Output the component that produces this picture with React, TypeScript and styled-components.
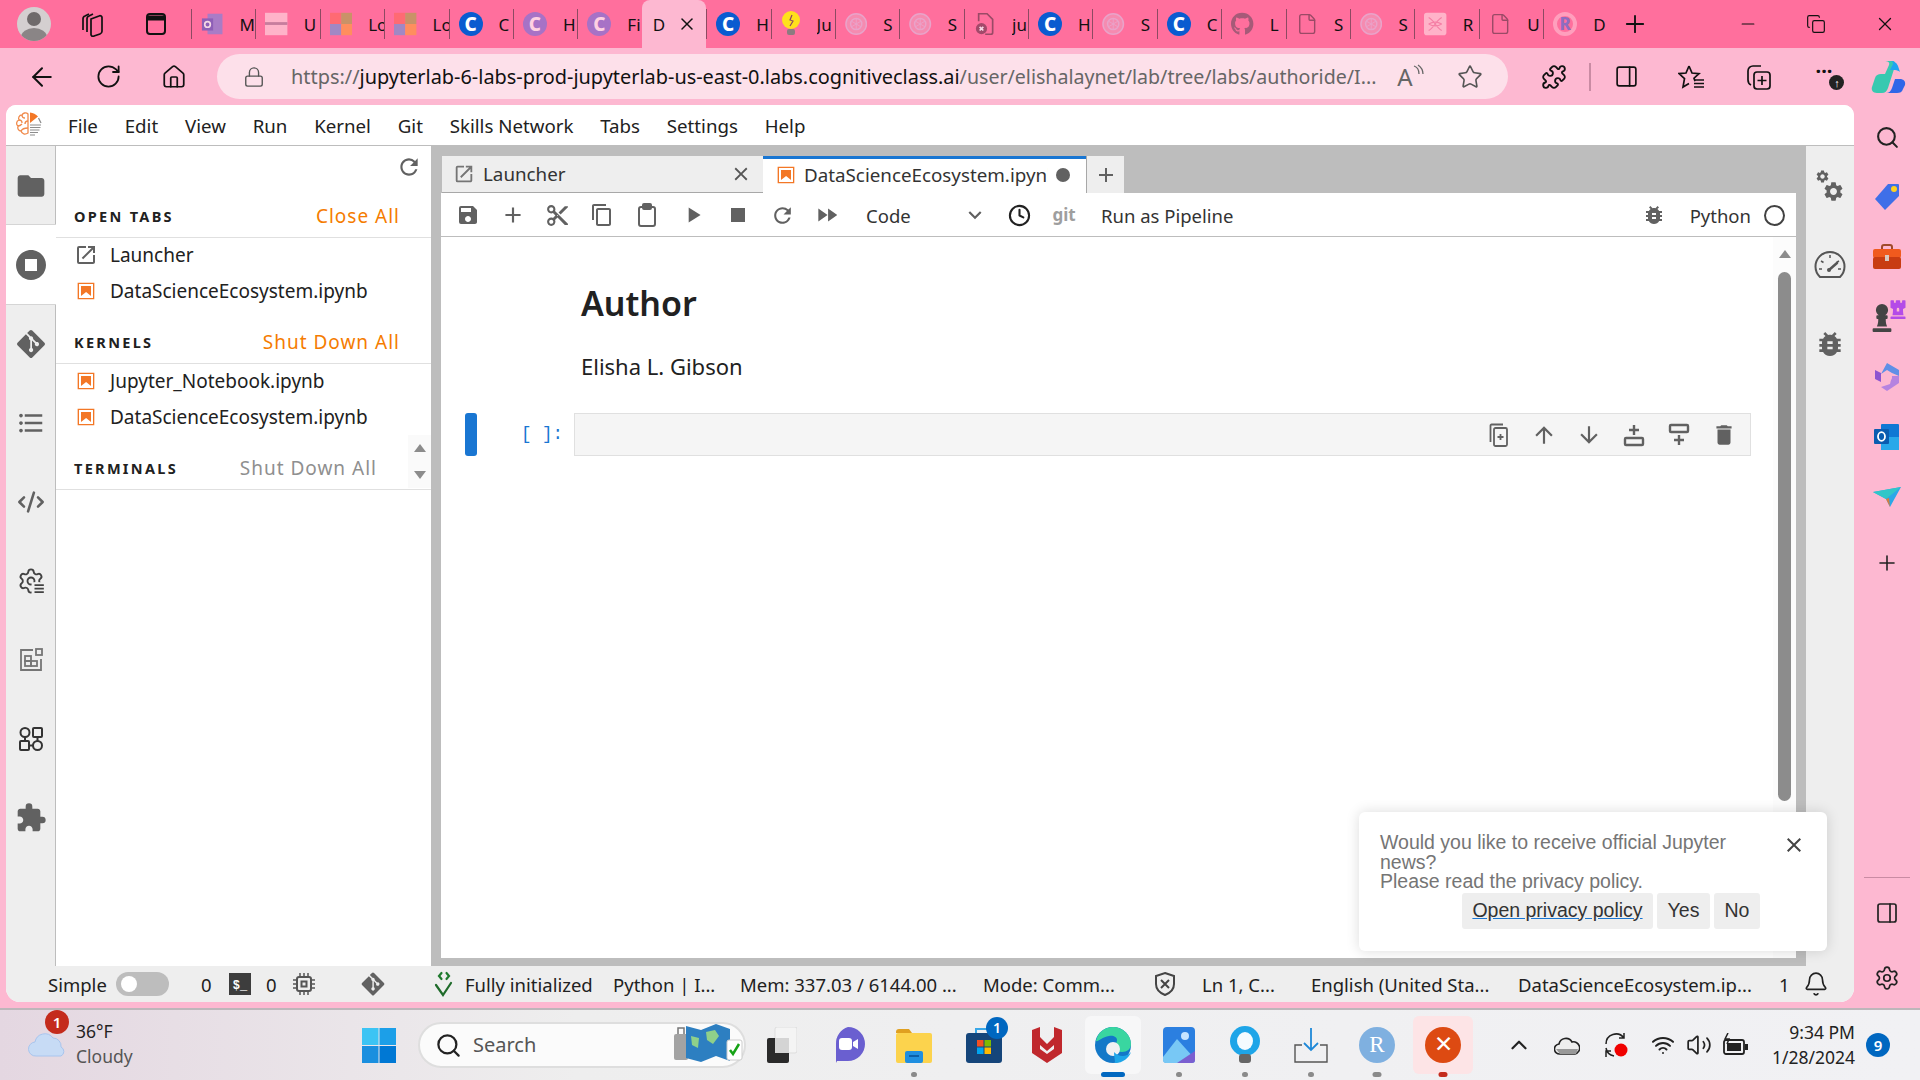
import React from "react";
import styled, { createGlobalStyle } from "styled-components";
import {
  MdAdd,
  MdArrowDownward,
  MdArrowUpward,
  MdContentCopy,
  MdContentCut,
  MdDelete,
  MdExtension,
  MdFastForward,
  MdFolder,
  MdFormatListBulleted,
  MdOpenInNew,
  MdPlayArrow,
  MdRefresh,
  MdSave,
  MdStop,
  MdStopCircle,
  MdBugReport,
  MdClose,
  MdKeyboardArrowDown,
} from "react-icons/md";
import { FaGitAlt, FaGithub, FaChessPawn, FaChessRook } from "react-icons/fa";
import {
  ArrowLeft,
  Bell,
  ChevronUp,
  Clock,
  CodeXml,
  Copy,
  Home,
  Lock,
  Minus,
  PanelRight,
  Plus,
  RotateCw,
  Search,
  Settings,
  Star,
  Volume2,
  Wifi,
  X,
  Puzzle,
  File,
} from "lucide-react";

const UI = `"Noto Sans", "Open Sans", sans-serif`;

const GlobalStyle = createGlobalStyle`
  html, body {
    margin: 0;
    width: 1920px;
    height: 1080px;
    overflow: hidden;
    font-family: ${UI};
    color: #212121;
  }
  * { box-sizing: border-box; }
`;

const Screen = styled.div`
  width: 1920px;
  height: 1080px;
  display: flex;
  flex-direction: column;
  background: #fdb8d1;
`;

const Slot = styled.div<{ $w?: number; $color?: string; $pl?: number; $ml?: number }>`
  width: ${(p) => (p.$w ? `${p.$w}px` : "auto")};
  flex: none;
  display: flex;
  align-items: center;
  justify-content: center;
  padding-left: ${(p) => p.$pl ?? 0}px;
  margin-left: ${(p) => p.$ml ?? 0}px;
  color: ${(p) => p.$color || "inherit"};
`;

/* ---- browser tab strip ---- */
const TabStrip = styled.div`
  height: 48px;
  display: flex;
  align-items: center;
  background: #ff6f9d;
  color: #111;
`;

const Avatar = styled.div`
  width: 34px;
  height: 34px;
  border-radius: 50%;
  background: #d4cfd0;
  overflow: hidden;
`;

const BrowserTab = styled.div<{ $active?: boolean }>`
  width: 64.4px;
  flex: none;
  height: ${(p) => (p.$active ? "48px" : "30px")};
  display: flex;
  align-items: center;
  padding-left: ${(p) => (p.$active ? "11px" : "9px")};
  background: ${(p) => (p.$active ? "#fdb8d1" : "transparent")};
  border-radius: ${(p) => (p.$active ? "8px 8px 0 0" : "0")};
  border-left: ${(p) => (p.$active ? "none" : "1px solid #8d4a62")};
  font-size: 17px;
  overflow: hidden;
  align-self: ${(p) => (p.$active ? "flex-end" : "center")};
`;

const TabLabel = styled.span`
  width: 16px;
  margin-left: 16px;
  overflow: hidden;
  white-space: nowrap;
  flex: none;
`;

const ActiveLabel = styled.span`
  width: 24px;
  flex: none;
`;

const FavCircle = styled.span<{ $bg: string; $fg: string }>`
  width: 24px;
  height: 24px;
  flex: none;
  border-radius: 50%;
  background: ${(p) => p.$bg};
  color: ${(p) => p.$fg};
  font: 800 19px/24px ${UI};
  text-align: center;
`;

const FavR = styled.span`
  width: 24px;
  height: 24px;
  flex: none;
  border-radius: 50%;
  border: 4px solid #ff9fbd;
  color: #8f6cc0;
  font: 800 17px/16px ${UI};
  text-align: center;
`;

const Spacer = styled.div`
  flex: 1;
`;

/* ---- address bar ---- */
const AddressBar = styled.div`
  height: 57px;
  display: flex;
  align-items: center;
  padding-left: 9px;
  color: #111;
`;

const UrlPill = styled.div`
  margin-left: 10px;
  width: 1291px;
  height: 45px;
  flex: none;
  border-radius: 23px;
  background: #fde0ea;
  display: flex;
  align-items: center;
  color: #555;
`;

const UrlText = styled.div`
  width: 1088px;
  flex: none;
  overflow: hidden;
  white-space: nowrap;
  font-size: 19.9px;
  color: #666;
  b {
    font-weight: 400;
    color: #111;
  }
  span {
    font-size: 19.6px;
  }
`;

const ReadAloud = styled.span`
  display: flex;
  align-items: flex-start;
  font-size: 24px;
  line-height: 26px;
  color: #666;
`;

const BarDivider = styled.div`
  width: 2px;
  height: 28px;
  background: #c98ba3;
  margin: 0 5px;
  flex: none;
`;

const UpdateDot = styled.span`
  position: absolute;
  right: -12px;
  bottom: -9px;
  width: 15px;
  height: 15px;
  border-radius: 50%;
  background: #222;
  color: #fff;
  font: 700 11px/15px ${UI};
  text-align: center;
`;

const Dots = styled.div`
  position: relative;
  font-size: 20px;
  font-weight: 700;
  line-height: 1;
  transform: translateY(-6px);
`;

/* ---- workspace: lab window + edge rail ---- */
const Workspace = styled.div`
  height: 903px;
  display: flex;
`;

const LabWindow = styled.div`
  position: relative;
  margin-left: 6px;
  width: 1848px;
  height: 897px;
  flex: none;
  display: flex;
  flex-direction: column;
  border-radius: 10px 10px 14px 14px;
  overflow: hidden;
  background: #fff;
`;

const MenuBar = styled.div`
  height: 41px;
  flex: none;
  display: flex;
  align-items: center;
  background: #fff;
  border-bottom: 1px solid #bdbdbd;
  padding-left: 8px;
`;

const LogoBox = styled.div`
  width: 54px;
  flex: none;
  display: flex;
`;

const MenuItem = styled.span`
  font-size: 18.7px;
  margin-right: 26.8px;
  color: #212121;
`;

const LabBody = styled.div`
  flex: 1;
  min-height: 0;
  display: flex;
  background: #bdbdbd;
`;

const Rail = styled.div<{ $w: number; $side: "left" | "right" }>`
  width: ${(p) => p.$w}px;
  flex: none;
  background: #eeeeee;
  display: flex;
  flex-direction: column;
  border-right: ${(p) => (p.$side === "left" ? "1px solid #bdbdbd" : "none")};
`;

const RailButton = styled.div<{ $active?: boolean }>`
  height: 79px;
  flex: none;
  display: flex;
  align-items: center;
  justify-content: center;
  color: #616161;
  background: ${(p) => (p.$active ? "#fff" : "transparent")};
  margin-right: ${(p) => (p.$active ? "-1px" : "0")};
  box-shadow: ${(p) => (p.$active ? "0 -1px 0 #d5d5d5, 0 1px 0 #d5d5d5" : "none")};
  position: relative;
`;

const SidePanel = styled.div`
  position: relative;
  width: 375px;
  flex: none;
  background: #fff;
  display: flex;
  flex-direction: column;
`;

const PanelTools = styled.div`
  height: 51px;
  flex: none;
  display: flex;
  justify-content: flex-end;
  padding: 8px 9px 0 0;
  color: #616161;
`;

const SectionHead = styled.div<{ $gap?: boolean; $right?: number }>`
  height: 41px;
  flex: none;
  margin-top: ${(p) => (p.$gap ? "13px" : "0")};
  border-bottom: 1px solid #e0e0e0;
  padding: 0 ${(p) => p.$right ?? 31}px 3px 18px;
  display: flex;
  align-items: center;
  justify-content: space-between;
`;

const SectionTitle = styled.span`
  font-size: 14.5px;
  font-weight: 700;
  letter-spacing: 2.3px;
  color: #212121;
`;

const SectionAction = styled.span<{ $off?: boolean }>`
  font-size: 19px;
  letter-spacing: 1px;
  color: ${(p) => (p.$off ? "#8f8f8f" : "#f57c00")};
`;

const SessionRow = styled.div`
  height: 36px;
  flex: none;
  display: flex;
  align-items: center;
  padding: 0 0 3px 20px;
  gap: 14px;
  font-size: 19px;
  color: #212121;
`;

const RowLauncher = styled(MdOpenInNew)`
  margin: 0 -2px;
`;

const SmallScroll = styled.div`
  position: absolute;
  right: 0;
  top: 289px;
  width: 23px;
  height: 53px;
  background: #fafafa;
  display: flex;
  flex-direction: column;
  align-items: center;
  justify-content: space-between;
  padding: 9px 0;
`;

const Tri = styled.span<{ $down?: boolean; $color?: string }>`
  width: 0;
  height: 0;
  border-left: 6px solid transparent;
  border-right: 6px solid transparent;
  ${(p) =>
    p.$down
      ? `border-top: 8px solid ${p.$color || "#8c8c8c"};`
      : `border-bottom: 8px solid ${p.$color || "#8c8c8c"};`}
`;

const MainArea = styled.div`
  width: 1355px;
  flex: none;
  margin: 10px 10px 8px;
  display: flex;
  flex-direction: column;
  min-height: 0;
`;

const DocTabs = styled.div`
  height: 37px;
  flex: none;
  display: flex;
`;

const DocTab = styled.div<{ $active?: boolean; $w: number }>`
  width: ${(p) => p.$w}px;
  flex: none;
  display: flex;
  align-items: center;
  gap: 8px;
  padding: ${(p) => (p.$active ? "0 16px 3px 13px" : "0 11px 0 11px")};
  background: ${(p) => (p.$active ? "#fff" : "#eeeeee")};
  border-top: ${(p) => (p.$active ? "3px solid #1976d2" : "none")};
  border-bottom: ${(p) => (p.$active ? "none" : "1px solid #a8a8a8")};
  font-size: 18.8px;
  color: #333;
  white-space: nowrap;
  margin-left: ${(p) => (p.$w === 321 ? "1px" : "0")};
`;

const DocTabName = styled.span`
  flex: 1;
  overflow: hidden;
`;

const DirtyDot = styled.span`
  width: 14px;
  height: 14px;
  flex: none;
  border-radius: 50%;
  background: #616161;
`;

const AddTab = styled.div`
  width: 38px;
  flex: none;
  background: #eeeeee;
  border-left: 1px solid #a8a8a8;
  display: flex;
  align-items: center;
  justify-content: center;
  color: #616161;
`;

const Toolbar = styled.div`
  height: 44px;
  flex: none;
  display: flex;
  align-items: center;
  background: #fff;
  border-bottom: 1px solid #bdbdbd;
  padding: 1px 0 0 4px;
  color: #616161;
`;

const ToolText = styled.span<{ $w?: number; $ml?: number }>`
  font-size: 18.5px;
  color: #333;
  width: ${(p) => (p.$w ? `${p.$w}px` : "auto")};
  margin-left: ${(p) => p.$ml ?? 0}px;
  flex: none;
`;

const GitWord = styled.span`
  width: 44px;
  margin-left: -4px;
  flex: none;
  text-align: center;
  font-size: 17px;
  font-weight: 700;
  color: #9e9e9e;
  transform: translateY(-1px);
`;

const KernelRing = styled.span`
  width: 21px;
  height: 21px;
  flex: none;
  border: 2px solid #424242;
  border-radius: 50%;
  margin-left: 13px;
`;

const Notebook = styled.div`
  flex: 1;
  min-height: 0;
  display: flex;
  background: #fff;
`;

const NotebookBody = styled.div`
  flex: 1;
  padding: 42px 22px 0 24px;
  display: flex;
  flex-direction: column;
`;

const Markdown = styled.div`
  padding-left: 116px;
`;

const Heading = styled.h1`
  margin: 0;
  height: 48px;
  font-size: 34px;
  line-height: 48px;
  font-weight: 600;
  color: #212121;
`;

const Para = styled.p`
  margin: 23px 0 0;
  font-size: 22px;
  line-height: 32px;
  color: #212121;
`;

const CodeCell = styled.div`
  margin-top: 31px;
  display: flex;
  height: 43px;
`;

const CellBar = styled.div`
  width: 12px;
  flex: none;
  background: #1976d2;
  border-radius: 3px;
`;

const Prompt = styled.div`
  width: 97px;
  flex: none;
  text-align: right;
  padding-right: 11px;
  font: 17.5px/43px "Liberation Mono", monospace;
  color: #1976d2;
`;

const CellInput = styled.div`
  flex: 1;
  background: #f5f5f5;
  border: 1px solid #e0e0e0;
  display: flex;
  align-items: center;
  justify-content: flex-end;
  padding-right: 4px;
  color: #616161;
`;

const ScrollTrack = styled.div`
  width: 23px;
  flex: none;
  background: #fcfcfc;
  display: flex;
  flex-direction: column;
  align-items: center;
  padding: 13px 0 0;
`;

const ScrollThumb = styled.div`
  width: 13px;
  height: 529px;
  margin-top: 14px;
  border-radius: 7px;
  background: #8c8c8c;
`;

const StatusBar = styled.div`
  height: 36px;
  flex: none;
  display: flex;
  align-items: center;
  background: #eeeeee;
  padding-left: 42px;
  font-size: 18.5px;
  color: #212121;
`;

const StatusCell = styled.div<{ $w: number }>`
  width: ${(p) => p.$w}px;
  flex: none;
  display: flex;
  align-items: center;
  white-space: nowrap;
  color: #212121;
`;

const Toggle = styled.div`
  width: 53px;
  height: 24px;
  border-radius: 12px;
  background: #bdbdbd;
  padding: 4px 5px;
  display: flex;
`;

const Knob = styled.span`
  width: 16px;
  height: 16px;
  border-radius: 50%;
  background: #fff;
`;

const TermBadge = styled.span`
  width: 22px;
  height: 22px;
  background: #3d3d3d;
  color: #fff;
  font: 700 12px/26px "Liberation Mono", monospace;
  text-align: center;
`;

const Toast = styled.div`
  position: absolute;
  left: 1353px;
  top: 707px;
  width: 468px;
  height: 139px;
  background: #fff;
  border-radius: 6px;
  box-shadow: 0 0 14px rgba(0, 0, 0, 0.14);
  padding: 21px 21px 0 21px;
  font-family: "Liberation Sans", Arial, sans-serif;
`;

const ToastTop = styled.div`
  display: flex;
  justify-content: space-between;
  align-items: flex-start;
`;

const ToastText = styled.div`
  width: 355px;
  font-size: 19.5px;
  line-height: 19.5px;
  color: #757575;
`;

const ToastClose = styled.div`
  color: #444;
`;

const ToastActions = styled.div`
  display: flex;
  gap: 4px;
  padding-left: 82px;
  margin-top: 1px;
`;

const ToastButton = styled.span<{ $w: number; $link?: boolean }>`
  width: ${(p) => p.$w}px;
  height: 36px;
  border-radius: 3px;
  background: #eeeeee;
  font-size: 19.5px;
  line-height: 34px;
  text-align: center;
  color: #333;
  text-decoration: ${(p) => (p.$link ? "underline" : "none")};
  text-decoration-color: #1976d2;
`;

/* ---- edge rail ---- */
const EdgeRail = styled.div`
  width: 66px;
  flex: none;
  display: flex;
  flex-direction: column;
  align-items: center;
  padding-top: 2px;
  color: #222;
`;

const EdgeSlot = styled.div<{ $h?: number }>`
  height: ${(p) => p.$h ?? 60}px;
  flex: none;
  display: flex;
  align-items: center;
  justify-content: center;
`;

const EdgeRule = styled.div`
  width: 46px;
  height: 1px;
  background: #c98ba3;
  flex: none;
`;

const Rook = styled(FaChessRook)`
  margin: -16px 0 0 -9px;
`;

/* ---- windows taskbar ---- */
const Taskbar = styled.div`
  height: 72px;
  flex: none;
  display: flex;
  align-items: center;
  border-top: 2px solid #bdb6ba;
  background: linear-gradient(90deg, #e4d7e1 0%, #eeeeee 30%, #f0f0f2 70%, #f1f1f4 100%);
`;

const Weather = styled.div`
  position: relative;
  width: 345px;
  flex: none;
  display: flex;
  align-items: center;
  padding-left: 28px;
  gap: 10px;
`;

const AlertDot = styled.span`
  position: absolute;
  left: 45px;
  top: -9px;
  width: 24px;
  height: 24px;
  border-radius: 50%;
  background: #c42b1c;
  color: #fff;
  font: 600 15px/24px ${UI};
  text-align: center;
`;

const WeatherText = styled.div`
  font-size: 17.5px;
  line-height: 25px;
  color: #222;
  padding-bottom: 2px;
  span {
    display: block;
    color: #555;
  }
`;

const SearchBox = styled.div`
  width: 328px;
  height: 46px;
  margin-left: 5px;
  flex: none;
  border-radius: 23px;
  border: 2px solid #dedede;
  background: #fbfbfb;
  display: flex;
  align-items: center;
  padding-left: 15px;
  gap: 11px;
  font-size: 20px;
  color: #555;
`;

const SearchLabel = styled.span`
  flex: 1;
  padding-bottom: 2px;
`;

const TaskApp = styled.div<{ $w: number; $dot?: string; $dotW?: number; $hl?: string; $hlW?: number }>`
  position: relative;
  width: ${(p) => p.$w}px;
  height: 70px;
  flex: none;
  display: flex;
  align-items: center;
  justify-content: center;
  &::before {
    content: "";
    display: ${(p) => (p.$hl ? "block" : "none")};
    position: absolute;
    left: 50%;
    top: 6px;
    width: ${(p) => p.$hlW ?? 56}px;
    height: 58px;
    transform: translateX(-50%);
    border-radius: 6px;
    background: ${(p) => p.$hl};
  }
  &::after {
    content: "";
    display: ${(p) => (p.$dot ? "block" : "none")};
    position: absolute;
    left: 50%;
    bottom: 3px;
    width: ${(p) => p.$dotW ?? 6}px;
    height: 5px;
    border-radius: 3px;
    transform: translateX(-50%);
    background: ${(p) => p.$dot};
  }
  & > * {
    position: relative;
  }
`;

const StoreBadge = styled.span`
  position: absolute;
  right: 13px;
  top: 7px;
  width: 22px;
  height: 22px;
  border-radius: 50%;
  background: #0067c0;
  color: #fff;
  font: 600 14px/22px ${UI};
  text-align: center;
`;

const AppCircle = styled.span<{ $bg: string }>`
  width: 36px;
  height: 36px;
  border-radius: 50%;
  background: ${(p) => p.$bg};
  color: #fff;
  font: 400 23px/36px "Liberation Serif", serif;
  text-align: center;
`;

const ClockBox = styled.div`
  width: 102px;
  flex: none;
  text-align: right;
  font-size: 17.5px;
  line-height: 25px;
  color: #222;
`;

const NoteBadge = styled.span`
  width: 24px;
  height: 24px;
  margin-left: 11px;
  flex: none;
  border-radius: 50%;
  background: #0067c0;
  color: #fff;
  font: 600 15px/24px ${UI};
  text-align: center;
`;

/* ---- drawn icons ---- */
const GEAR =
  "M19.14 12.94c.04-.3.06-.61.06-.94 0-.32-.02-.64-.07-.94l2.03-1.58a.49.49 0 0 0 .12-.61l-1.92-3.32a.488.488 0 0 0-.59-.22l-2.39.96c-.5-.38-1.03-.7-1.62-.94l-.36-2.54a.484.484 0 0 0-.48-.41h-3.84c-.24 0-.43.17-.47.41l-.36 2.54c-.59.24-1.13.57-1.62.94l-2.39-.96c-.22-.08-.47 0-.59.22L2.74 8.87c-.12.21-.08.47.12.61l2.03 1.58c-.05.3-.09.63-.09.94s.02.64.07.94l-2.03 1.58a.49.49 0 0 0-.12.61l1.92 3.32c.12.22.37.29.59.22l2.39-.96c.5.38 1.03.7 1.62.94l.36 2.54c.05.24.24.41.48.41h3.84c.24 0 .44-.17.47-.41l.36-2.54c.59-.24 1.13-.56 1.62-.94l2.39.96c.22.08.47 0 .59-.22l1.92-3.32c.12-.22.07-.47-.12-.61l-2.01-1.58zM12 15.6c-1.98 0-3.6-1.62-3.6-3.6s1.62-3.6 3.6-3.6 3.6 1.62 3.6 3.6-1.62 3.6-3.6 3.6z";

const NotebookIcon = ({ size = 20 }: { size?: number }) => (
  <svg width={size} height={size} viewBox="0 0 22 22">
    <path fill="#f37726" d="M18.7 3.3v15.4H3.3V3.3h15.4m1.5-1.5H1.8v18.3h18.3l.1-18.3z" />
    <path fill="#f37726" d="M16.5 16.5l-5.4-4.3-5.6 4.3v-11h11z" />
  </svg>
);

const LabLogo = () => (
  <svg width="30" height="28" viewBox="0 0 30 28">
    <g fill="none" stroke="#f08a4b" strokeWidth="1.3">
      <path d="M14 3c-2-2-5-1-6 1-3 0-4 3-3 5-3 1-3 5-1 6-1 3 1 5 3 5 1 3 4 4 7 2z" />
      <path d="M5 9c2 0 3 1 3 3M8 4c0 2 1 3 3 3M4 15c2 0 3-1 4-2M7 20c1-2 3-3 7-3M14 10c-2 0-3 1-3 3" />
    </g>
    <path fill="#f37726" d="M16 1.5a12 12 0 0 1 8 4L16 12z" />
    <g stroke="#8c8c8c" strokeWidth="1.2">
      <path d="M16 14h11M16 16.5h10.5M16 19h9.5M16 21.5h8M16 24h5" />
      <path d="M24.5 7l2.5 5" />
    </g>
  </svg>
);

const GearLines = () => (
  <svg width="28" height="28" viewBox="0 0 24 24" fill="none" stroke="#424242" strokeWidth="1.6">
    <path d="M9.671 4.136a2.34 2.34 0 0 1 4.659 0 2.34 2.34 0 0 0 3.319 1.915 2.34 2.34 0 0 1 2.33 4.033 2.34 2.34 0 0 0 0 3.831 2.34 2.34 0 0 1-2.33 4.033 2.34 2.34 0 0 0-3.319 1.915 2.34 2.34 0 0 1-4.659 0 2.34 2.34 0 0 0-3.32-1.915 2.34 2.34 0 0 1-2.33-4.033 2.34 2.34 0 0 0 0-3.831A2.34 2.34 0 0 1 6.35 6.051a2.34 2.34 0 0 0 3.319-1.915" />
    <circle cx="12" cy="12" r="3" />
    <rect x="12.5" y="13" width="11.5" height="11" fill="#eee" stroke="none" />
    <path d="M15 15.5h8M15 18.5h8M15 21.5h8" />
  </svg>
);

const BoardIcon = () => (
  <svg width="26" height="26" viewBox="0 0 26 26" fill="none" stroke="#757575" strokeWidth="1.8">
    <path d="M15 3H3v20h20V12" />
    <rect x="18" y="2" width="6" height="6" />
    <rect x="7" y="9" width="6" height="5" />
    <rect x="7" y="14" width="6" height="5" />
    <rect x="13" y="14" width="6" height="5" />
  </svg>
);

const NodesIcon = () => (
  <svg width="26" height="26" viewBox="0 0 26 26" fill="none" stroke="#333" strokeWidth="2">
    <circle cx="7" cy="6.5" r="4.5" />
    <rect x="15" y="2" width="9" height="9" rx="1" />
    <rect x="2" y="15" width="9" height="9" rx="1" />
    <circle cx="19.5" cy="19.5" r="4.5" />
    <path d="M7 11v4M19.5 11v4M11 19.5h4" />
  </svg>
);

const GitDiamond = ({ size, color }: { size: number; color: string }) => <FaGitAlt size={size} color={color} />;

const CogsIcon = () => (
  <svg width="30" height="34" viewBox="0 0 30 34" fill="#616161">
    <svg x="0" y="0" width="15" height="15" viewBox="0 0 24 24">
      <path d={GEAR} />
    </svg>
    <svg x="7" y="11" width="23" height="23" viewBox="0 0 24 24">
      <path d={GEAR} />
    </svg>
  </svg>
);

const SpeedIcon = () => (
  <svg width="32" height="32" viewBox="0 0 32 32" fill="none" stroke="#555" strokeWidth="2">
    <path d="M6 28a14.5 14.5 0 1 1 20 0z" />
    <path d="M16 6v3M7 12l2.5 1.5M25 12l-2.5 1.5M5 20h3M27 20h-3" strokeWidth="1.5" />
    <path d="M15 21l8-7" strokeWidth="2.5" strokeLinecap="round" />
    <circle cx="15" cy="21" r="2" fill="#555" stroke="none" />
  </svg>
);

const PasteIcon = () => (
  <svg width="22" height="24" viewBox="0 0 22 24" fill="none" stroke="#616161" strokeWidth="2">
    <rect x="3" y="4" width="16" height="19" rx="2" />
    <rect x="7" y="1" width="8" height="5" rx="1" fill="#616161" />
  </svg>
);

const AddCellAbove = () => (
  <svg width="22" height="24" viewBox="0 0 22 24" fill="none" stroke="#616161" strokeWidth="2.4">
    <path d="M11 2v10M6 7h10" />
    <rect x="2" y="15" width="18" height="7" rx="1" />
  </svg>
);

const AddCellBelow = () => (
  <svg width="22" height="24" viewBox="0 0 22 24" fill="none" stroke="#616161" strokeWidth="2.4">
    <rect x="2" y="2" width="18" height="7" rx="1" />
    <path d="M11 12v10M6 17h10" />
  </svg>
);

const DupCell = () => (
  <svg width="20" height="24" viewBox="0 0 20 24" fill="none" stroke="#616161" strokeWidth="1.8">
    <path d="M1.5 19V2.5a1 1 0 0 1 1-1H14" />
    <rect x="5" y="5" width="13" height="18" rx="1.5" />
    <path d="M11.5 11v6M8.5 14h6" />
  </svg>
);

const TraceIcon = () => (
  <svg width="24" height="26" viewBox="0 0 24 26" fill="none" strokeWidth="2.2" strokeLinecap="round">
    <path d="M9.5 2L7 5l2.5 3M14.5 2L17 5l-2.5 3" stroke="#1f7a2e" />
    <path d="M4 14l7 10 8-12" stroke="#1f6b2a" />
  </svg>
);

const ShieldX = () => (
  <svg width="24" height="26" viewBox="0 0 24 26" fill="none" stroke="#444" strokeWidth="2">
    <path d="M12 2l9 3v8c0 5-4 9-9 11-5-2-9-6-9-11V5z" />
    <path d="M8 9l8 8M16 9l-8 8" />
  </svg>
);

const ChipIcon = () => (
  <svg width="22" height="22" viewBox="0 0 22 22" fill="none" stroke="#555" strokeWidth="2">
    <rect x="4" y="4" width="14" height="14" rx="2" />
    <rect x="8.5" y="8.5" width="5" height="5" />
    <path d="M7 0v4M11 0v4M15 0v4M7 18v4M11 18v4M15 18v4M0 7h4M0 11h4M0 15h4M18 7h4M18 11h4M18 15h4" strokeWidth="1.5" />
  </svg>
);

const AvatarFace = () => (
  <svg width="34" height="34" viewBox="0 0 34 34">
    <circle cx="17" cy="12" r="7" fill="#6f6a6b" />
    <ellipse cx="17" cy="30" rx="13" ry="9" fill="#8a8586" />
  </svg>
);

const WorkspacesIcon = () => (
  <svg width="26" height="26" viewBox="0 0 26 26" fill="none" stroke="#111" strokeWidth="1.7">
    <path d="M4 19V8a3 3 0 0 1 2-3l4-2" />
    <path d="M8 21V8a3 3 0 0 1 2-3l4-2" />
    <path d="M12 8l8-3a2 2 0 0 1 3 2v13a3 3 0 0 1-2 3l-6 2a2 2 0 0 1-3-2z" />
  </svg>
);

const VerticalTabs = () => (
  <svg width="22" height="24" viewBox="0 0 22 24" fill="none" stroke="#111" strokeWidth="2">
    <rect x="2" y="2" width="18" height="20" rx="3" />
    <path d="M2 6h18" strokeWidth="5" />
  </svg>
);

const OutlookFav = () => (
  <svg width="24" height="24" viewBox="0 0 24 24">
    <rect x="7" y="1" width="16" height="22" fill="#a97cc6" />
    <rect x="1" y="6" width="12" height="13" fill="#8e5fb7" />
    <circle cx="7" cy="12.5" r="3" fill="none" stroke="#f5d8e5" strokeWidth="1.8" />
  </svg>
);

const PinkFav = () => (
  <svg width="24" height="24" viewBox="0 0 24 24" fill="none" stroke="#e9a3c9" strokeWidth="1.6">
    <circle cx="12" cy="12" r="11" fill="#f58bb0" />
    <circle cx="12" cy="12" r="6" />
    <path d="M12 6v12M7 9l10 6M17 9L7 15" strokeWidth="1" />
  </svg>
);

const GridFav = () => (
  <svg width="24" height="24" viewBox="0 0 24 24">
    <rect width="12" height="12" fill="#ff6a73" />
    <rect x="12" width="12" height="12" fill="#c99268" />
    <rect y="12" width="12" height="12" fill="#a188c4" />
    <rect x="12" y="12" width="12" height="12" fill="#ff8e5e" />
  </svg>
);

const InsertFav = () => (
  <svg width="24" height="24" viewBox="0 0 24 24">
    <rect width="24" height="24" fill="#ffb3c9" />
    <rect y="10" width="24" height="3" fill="#c77d9d" />
  </svg>
);

const BulbFav = () => (
  <svg width="20" height="26" viewBox="0 0 20 26">
    <circle cx="10" cy="9" r="9" fill="#ffe11c" />
    <rect x="6" y="18" width="8" height="6" rx="2" fill="#8d7b80" />
    <path d="M11 4l-2 5 3 1-3 5" fill="none" stroke="#8d4a62" strokeWidth="1.2" />
  </svg>
);

const FileXFav = () => (
  <svg width="24" height="26" viewBox="0 0 24 26" fill="none" stroke="#9a4a66" strokeWidth="1.8">
    <path d="M5 10V2h9l6 6v14a2 2 0 0 1-2 2h-6" />
    <circle cx="8" cy="18" r="6" fill="#a3496a" stroke="none" />
    <path d="M6 16l4 4M10 16l-4 4" stroke="#f5d8e5" />
  </svg>
);

const MeshFav = () => (
  <svg width="24" height="24" viewBox="0 0 24 24" fill="none" stroke="#f57fa5" strokeWidth="1.3">
    <rect width="24" height="24" rx="3" fill="#ffb3c9" stroke="none" />
    <path d="M5 5c6 3 8 11 14 14M19 5C13 8 11 16 5 19M5 12c5-3 9-3 14 0M5 12c5 3 9 3 14 0" />
  </svg>
);

const favicons: Record<string, React.ReactNode> = {
  outlook: <OutlookFav />,
  insert: <InsertFav />,
  grid: <GridFav />,
  blue: (
    <FavCircle $bg="#0a5bd0" $fg="#fff">
      C
    </FavCircle>
  ),
  purple: (
    <FavCircle $bg="#a772c6" $fg="#ffd0e2">
      C
    </FavCircle>
  ),
  bulb: <BulbFav />,
  pink: <PinkFav />,
  filex: <FileXFav />,
  github: <FaGithub size={24} color="#a65a78" />,
  file: <File size={24} color="#9a4a66" strokeWidth={1.5} />,
  mesh: <MeshFav />,
  r: <FavR>R</FavR>,
};

const browserTabs: { icon: string; label: string; active?: boolean }[] = [
  { icon: "outlook", label: "M" },
  { icon: "insert", label: "U" },
  { icon: "grid", label: "Lo" },
  { icon: "grid", label: "Lo" },
  { icon: "blue", label: "C" },
  { icon: "purple", label: "H" },
  { icon: "purple", label: "Fi" },
  { icon: "", label: "D", active: true },
  { icon: "blue", label: "H" },
  { icon: "bulb", label: "Ju" },
  { icon: "pink", label: "S" },
  { icon: "pink", label: "S" },
  { icon: "filex", label: "ju" },
  { icon: "blue", label: "H" },
  { icon: "pink", label: "S" },
  { icon: "blue", label: "C" },
  { icon: "github", label: "L" },
  { icon: "file", label: "S" },
  { icon: "pink", label: "S" },
  { icon: "mesh", label: "R" },
  { icon: "file", label: "U" },
  { icon: "r", label: "D" },
];

const SoundArcs = () => (
  <svg width="12" height="20" viewBox="0 0 12 20" fill="none" stroke="#666" strokeWidth="1.3">
    <path d="M1 2c3 1 5 4 5 8M5 1c3 2 5 5 5 9" />
  </svg>
);

const FavoritesIcon = () => (
  <svg width="28" height="26" viewBox="0 0 28 26" fill="none" stroke="#111" strokeWidth="1.7">
    <path d="M11 2l3 7 7 .6-5 4.6 1 3M11 2L8 9l-7 .6 5.5 5L5 23l6-3.5" />
    <path d="M16 16h10M16 19.5h10M16 23h10" />
  </svg>
);

const CollectionsIcon = () => (
  <svg width="28" height="28" viewBox="0 0 28 28" fill="none" stroke="#111" strokeWidth="1.7">
    <path d="M6 22c-2-1-3-3-3-5V8a5 5 0 0 1 5-5h8" />
    <rect x="9" y="9" width="16" height="17" rx="3" />
    <path d="M17 13v9M12.5 17.5h9" />
  </svg>
);

const TagIcon = () => (
  <svg width="26" height="28" viewBox="0 0 26 28">
    <path d="M14 1h10a1 1 0 0 1 1 1v11L11 27 1 16z" fill="#3f6fe8" />
    <circle cx="20" cy="6" r="3" fill="#ffd21e" />
  </svg>
);

const ToolboxIcon = () => (
  <svg width="28" height="26" viewBox="0 0 28 26">
    <path d="M9 6V3a2 2 0 0 1 2-2h6a2 2 0 0 1 2 2v3" fill="none" stroke="#a04a2a" strokeWidth="2" />
    <rect y="5" width="28" height="9" rx="2" fill="#f05a1e" />
    <rect y="13" width="28" height="12" rx="2" fill="#c83c12" />
    <rect x="12" y="11" width="4" height="6" fill="#d8c8c0" />
  </svg>
);

const M365Icon = () => (
  <svg width="26" height="30" viewBox="0 0 26 30">
    <path d="M13 1l12 7v6l-7-3-5-3-6 4z" fill="#5f8fe6" />
    <path d="M1 8l6 3v9l-6-3z" fill="#8d54d0" />
    <path d="M25 14v7l-12 8-6-4 9-3 2-8z" fill="#b583e0" />
    <circle cx="13" cy="15" r="5" fill="#fdb8d1" />
  </svg>
);

const OutlookIcon = () => (
  <svg width="26" height="28" viewBox="0 0 26 28">
    <rect x="7" y="1" width="18" height="26" rx="1" fill="#0f78d4" />
    <path d="M7 14h18v13H7z" fill="#28a8ea" />
    <rect y="6" width="15" height="15" rx="1" fill="#0a5cb0" />
    <ellipse cx="7.5" cy="13.5" rx="3.5" ry="4.3" fill="none" stroke="#fff" strokeWidth="1.8" />
  </svg>
);

const SendIcon = () => (
  <svg width="28" height="22" viewBox="0 0 28 22">
    <path d="M0 6L28 1 17 21l-4-8z" fill="#2aa7e8" />
    <path d="M13 13L28 1 0 6z" fill="#31c6c8" />
    <path d="M13 13l4 8-1-9z" fill="#d87b3c" />
  </svg>
);

const CopilotIcon = () => (
  <svg width="36" height="34" viewBox="0 0 36 34">
    <path d="M14 1h8c3 0 4 2 3 5l-7 22c-1 3-3 5-6 5H7c-4 0-6-3-5-6l3-9c1-3 3-4 6-4h4l4-9c1-3-1-4-5-4z" fill="#38c9b0" />
    <path d="M20 1c4 0 7 2 8 5l2 6c-1-1-3-2-5-2h-5l3-6c0-2-1-3-3-3z" fill="#1ea5f0" />
    <path d="M16 33c3 0 5-2 6-5l3-9h5c3 0 6 2 5 6l-2 4c-1 3-3 4-6 4z" fill="#2f66e8" />
  </svg>
);

const WinLogo = () => (
  <svg width="34" height="35" viewBox="0 0 34 35">
    <rect width="16.5" height="17" fill="#3cc4f4" />
    <rect x="17.5" width="16.5" height="17" fill="#1c9fe8" />
    <rect y="18" width="16.5" height="17" fill="#1a8fdf" />
    <rect x="17.5" y="18" width="16.5" height="17" fill="#0078d4" />
  </svg>
);

const MapPic = () => (
  <svg width="70" height="46" viewBox="0 0 70 46">
    <rect x="0" y="12" width="14" height="26" rx="2" fill="#a3a3a3" />
    <path d="M4 12V6h6v6" fill="none" stroke="#777" strokeWidth="1.5" />
    <path d="M12 4l15 4 15-6 14 5v32l-14-5-15 6-15-4z" fill="#2d7fc1" />
    <path d="M17 14l8 2-1 10-6-3zM32 10l9-2 4 6-6 8-6-4z" fill="#8fd08a" />
    <rect x="53" y="18" width="15" height="20" rx="2" fill="#fff" stroke="#ccc" />
    <path d="M56 28l3 4 6-10" fill="none" stroke="#17a317" strokeWidth="2.5" />
  </svg>
);

const TaskView = () => (
  <svg width="30" height="36" viewBox="0 0 30 36">
    <rect x="8" y="0" width="22" height="26" rx="2" fill="#f4f4f4" stroke="#ddd" />
    <rect x="0" y="11" width="22" height="25" rx="2" fill="#2a2a2a" />
    <path d="M8 11h14v15H8z" fill="#d4d4d4" />
  </svg>
);

const ChatIcon = () => (
  <svg width="36" height="38" viewBox="0 0 36 38">
    <path d="M18 1a17 17 0 0 1 0 34H7l-1 2V18A17 17 0 0 1 18 1z" fill="#6a5fd0" />
    <rect x="9" y="12" width="13" height="12" rx="3" fill="#fff" />
    <path d="M23 16l5-3v10l-5-3z" fill="#fff" />
  </svg>
);

const ExplorerIcon = () => (
  <svg width="36" height="36" viewBox="0 0 36 36">
    <path d="M0 5a3 3 0 0 1 3-3h10l3 4H0z" fill="#e0a020" />
    <rect y="6" width="36" height="30" rx="2" fill="#fcd34d" />
    <rect x="9" y="24" width="18" height="12" rx="2" fill="#1f8fe0" />
    <rect x="13" y="28" width="10" height="2" fill="#0b5fa8" />
  </svg>
);

const StoreIcon = () => (
  <svg width="36" height="36" viewBox="0 0 36 36">
    <path d="M10 6V2h16v4" fill="none" stroke="#3aa8e8" strokeWidth="2" />
    <rect y="6" width="36" height="30" rx="3" fill="#15457a" />
    <rect x="11" y="13" width="6.5" height="6.5" fill="#f25022" />
    <rect x="18.5" y="13" width="6.5" height="6.5" fill="#7fba00" />
    <rect x="11" y="20.5" width="6.5" height="6.5" fill="#00a4ef" />
    <rect x="18.5" y="20.5" width="6.5" height="6.5" fill="#ffb900" />
  </svg>
);

const McAfeeIcon = () => (
  <svg width="30" height="36" viewBox="0 0 30 36">
    <path d="M0 3l8-3v22l7 5 7-5V0l8 3v23l-15 10L0 26z" fill="#c0282d" />
    <path d="M8 10l7 7 7-7v8l-7 6-7-6z" fill="#c0282d" />
  </svg>
);

const EdgeIcon = () => (
  <svg width="36" height="36" viewBox="0 0 36 36">
    <circle cx="18" cy="18" r="18" fill="#1378c8" />
    <path d="M1 14C3 5 10 0 18 0c10 0 18 8 18 17 0 5-4 8-9 8-6 0-8-3-8-5 0-3 3-3 3-7 0-3-4-5-8-4-7 1-11 6-13 5z" fill="#39d6a0" />
    <circle cx="18" cy="22" r="7" fill="#f0f0f2" />
    <path d="M20 36c8 0 14-5 16-11-3 4-9 5-13 3-2-1-3-2-4-3 0 4 1 8 1 11z" fill="#1ea5e8" />
  </svg>
);

const PhotosIcon = () => (
  <svg width="32" height="36" viewBox="0 0 32 36">
    <rect width="32" height="36" rx="4" fill="#2b7fe0" />
    <circle cx="22" cy="9" r="4" fill="#c6e4ff" />
    <path d="M0 30L14 12l18 20v1a3 3 0 0 1-3 3H3a3 3 0 0 1-3-3z" fill="#78c8f5" />
    <path d="M14 36l18-12v9a3 3 0 0 1-3 3z" fill="#7a5fd0" />
  </svg>
);

const TipsIcon = () => (
  <svg width="32" height="38" viewBox="0 0 32 38">
    <circle cx="16" cy="15" r="15" fill="#1ea5e8" />
    <ellipse cx="16" cy="15" rx="8" ry="9" fill="#f4fbff" />
    <rect x="10" y="28" width="12" height="9" rx="3" fill="#666" />
  </svg>
);

const DownloadIcon = () => (
  <svg width="36" height="36" viewBox="0 0 36 36" fill="none" stroke="#555" strokeWidth="1.4">
    <path d="M9 18H2v17h32V18h-7" />
    <path d="M18 1v22M11 16l7 7 7-7" stroke="#1e88d8" strokeWidth="1.8" />
  </svg>
);

const OneDrive = () => (
  <svg width="26" height="20" viewBox="0 0 26 20">
    <path d="M6 19a5 5 0 0 1-1-10 7 7 0 0 1 13-2 6 6 0 0 1 3 12z" fill="#eee" stroke="#222" strokeWidth="1.6" />
    <path d="M2 14h22l-2 5H6z" fill="#999" />
  </svg>
);

const SyncDot = () => (
  <svg width="26" height="28" viewBox="0 0 26 28" fill="none" stroke="#222" strokeWidth="1.5">
    <path d="M3 13A10 10 0 0 1 21 7M21 2v5h-5M3 17a10 10 0 0 0 8 8M3 26v-6h5" />
    <circle cx="18" cy="19" r="6.5" fill="#f00000" stroke="none" />
  </svg>
);

const BatteryIcon = () => (
  <svg width="26" height="24" viewBox="0 0 26 24" fill="none" stroke="#222" strokeWidth="1.8">
    <rect x="2" y="7" width="20" height="14" rx="2" />
    <rect x="5" y="10" width="14" height="8" fill="#222" stroke="none" />
    <path d="M23 11h3v6h-3z" fill="#222" stroke="none" />
    <path d="M6 0L3 6h4l-2 5" strokeWidth="1.5" />
  </svg>
);

const WeatherCloud = () => (
  <svg width="38" height="24" viewBox="0 0 38 24">
    <path d="M8 23a7 7 0 0 1-1-14 10 10 0 0 1 18-4 8 8 0 0 1 8 9 5 5 0 0 1 0 9z" fill="#c7dbf5" stroke="#a8c5ee" />
  </svg>
);

const BugIcon = ({ size }: { size: number }) => <MdBugReport size={size} color="#616161" />;

const railIcons: React.ReactNode[] = [
  <MdFolder size={32} key="f" />,
  <MdStopCircle size={36} key="s" />,
  <GitDiamond size={32} color="#616161" key="g" />,
  <MdFormatListBulleted size={30} key="l" />,
  <CodeXml size={28} key="c" strokeWidth={2.2} />,
  <GearLines key="gl" />,
  <BoardIcon key="b" />,
  <NodesIcon key="n" />,
  <MdExtension size={32} key="e" />,
];

const statusRest: [number, string][] = [
  [148, "Fully initialized"],
  [127, "Python | I..."],
  [243, "Mem: 337.03 / 6144.00 ..."],
  [170, "Mode: Comm..."],
];

export default function App() {
  return (
    <>
      <GlobalStyle />
      <Screen>
        <TabStrip>
          <Slot $w={68}>
            <Avatar>
              <AvatarFace />
            </Avatar>
          </Slot>
          <Slot $w={48}>
            <WorkspacesIcon />
          </Slot>
          <Slot $w={75} $pl={5}>
            <VerticalTabs />
          </Slot>
          {browserTabs.map((t, i) =>
            t.active ? (
              <BrowserTab $active key={i}>
                <ActiveLabel>{t.label}</ActiveLabel>
                <X size={20} strokeWidth={1.8} />
              </BrowserTab>
            ) : (
              <BrowserTab key={i}>
                {favicons[t.icon]}
                <TabLabel>{t.label}</TabLabel>
              </BrowserTab>
            )
          )}
          <Slot $w={54}>
            <Plus size={28} strokeWidth={1.6} />
          </Slot>
          <Spacer />
          <Slot $w={68}>
            <Minus size={20} strokeWidth={1.4} />
          </Slot>
          <Slot $w={68}>
            <Copy size={20} strokeWidth={1.4} />
          </Slot>
          <Slot $w={70}>
            <X size={22} strokeWidth={1.4} />
          </Slot>
        </TabStrip>

        <AddressBar>
          <Slot $w={66}>
            <ArrowLeft size={30} strokeWidth={1.6} />
          </Slot>
          <Slot $w={66}>
            <RotateCw size={27} strokeWidth={1.6} />
          </Slot>
          <Slot $w={66}>
            <Home size={26} strokeWidth={1.6} />
          </Slot>
          <UrlPill>
            <Slot $w={74}>
              <Lock size={22} strokeWidth={1.5} />
            </Slot>
            <UrlText>
              https://<b>jupyterlab-6-labs-prod-jupyterlab-us-east-0.labs.cognitiveclass.ai</b>
              <span>/user/elishalaynet/lab/tree/labs/authoride/I...</span>
            </UrlText>
            <Slot $w={64}>
              <ReadAloud>
                A
                <SoundArcs />
              </ReadAloud>
            </Slot>
            <Slot $w={53}>
              <Star size={26} strokeWidth={1.5} />
            </Slot>
          </UrlPill>
          <Slot $w={60} $ml={16}>
            <Puzzle size={26} strokeWidth={1.7} />
          </Slot>
          <BarDivider />
          <Slot $w={60}>
            <PanelRight size={25} strokeWidth={1.6} />
          </Slot>
          <Slot $w={72}>
            <FavoritesIcon />
          </Slot>
          <Slot $w={62}>
            <CollectionsIcon />
          </Slot>
          <Slot $w={68}>
            <Dots>
              ···
              <UpdateDot>↑</UpdateDot>
            </Dots>
          </Slot>
          <Slot $w={60}>
            <CopilotIcon />
          </Slot>
        </AddressBar>

        <Workspace>
          <LabWindow>
            <MenuBar>
              <LogoBox>
                <LabLogo />
              </LogoBox>
              {["File", "Edit", "View", "Run", "Kernel", "Git", "Skills Network", "Tabs", "Settings", "Help"].map((m) => (
                <MenuItem key={m}>{m}</MenuItem>
              ))}
            </MenuBar>
            <LabBody>
              <Rail $w={50} $side="left">
                {railIcons.map((ic, i) => (
                  <RailButton key={i} $active={i === 1}>
                    {ic}
                  </RailButton>
                ))}
              </Rail>
              <SidePanel>
                <PanelTools>
                  <MdRefresh size={26} />
                </PanelTools>
                <SectionHead>
                  <SectionTitle>OPEN TABS</SectionTitle>
                  <SectionAction>Close All</SectionAction>
                </SectionHead>
                <SessionRow>
                  <RowLauncher size={24} color="#616161" />
                  Launcher
                </SessionRow>
                <SessionRow>
                  <NotebookIcon />
                  DataScienceEcosystem.ipynb
                </SessionRow>
                <SectionHead $gap>
                  <SectionTitle>KERNELS</SectionTitle>
                  <SectionAction>Shut Down All</SectionAction>
                </SectionHead>
                <SessionRow>
                  <NotebookIcon />
                  Jupyter_Notebook.ipynb
                </SessionRow>
                <SessionRow>
                  <NotebookIcon />
                  DataScienceEcosystem.ipynb
                </SessionRow>
                <SectionHead $gap $right={54}>
                  <SectionTitle>TERMINALS</SectionTitle>
                  <SectionAction $off>Shut Down All</SectionAction>
                </SectionHead>
                <SmallScroll>
                  <Tri />
                  <Tri $down />
                </SmallScroll>
              </SidePanel>

              <MainArea>
                <DocTabs>
                  <DocTab $w={321}>
                    <MdOpenInNew size={22} color="#757575" />
                    <DocTabName>Launcher</DocTabName>
                    <MdClose size={22} color="#555" />
                  </DocTab>
                  <DocTab $active $w={323}>
                    <NotebookIcon />
                    <DocTabName>DataScienceEcosystem.ipynb</DocTabName>
                    <DirtyDot />
                  </DocTab>
                  <AddTab>
                    <MdAdd size={24} />
                  </AddTab>
                </DocTabs>
                <Toolbar>
                  <Slot $w={45}>
                    <MdSave size={24} />
                  </Slot>
                  <Slot $w={45}>
                    <MdAdd size={26} />
                  </Slot>
                  <Slot $w={44}>
                    <MdContentCut size={25} />
                  </Slot>
                  <Slot $w={45}>
                    <MdContentCopy size={24} />
                  </Slot>
                  <Slot $w={46}>
                    <PasteIcon />
                  </Slot>
                  <Slot $w={45}>
                    <MdPlayArrow size={26} />
                  </Slot>
                  <Slot $w={45}>
                    <MdStop size={28} />
                  </Slot>
                  <Slot $w={44}>
                    <MdRefresh size={25} />
                  </Slot>
                  <Slot $w={46}>
                    <MdFastForward size={26} />
                  </Slot>
                  <ToolText $w={92} $ml={16}>
                    Code
                  </ToolText>
                  <Slot $w={34}>
                    <MdKeyboardArrowDown size={26} />
                  </Slot>
                  <Slot $w={54} $color="#222">
                    <Clock size={23} strokeWidth={2.2} />
                  </Slot>
                  <GitWord>git</GitWord>
                  <ToolText $ml={15}>Run as Pipeline</ToolText>
                  <Spacer />
                  <Slot $w={36}>
                    <BugIcon size={24} />
                  </Slot>
                  <ToolText $ml={18}>Python</ToolText>
                  <KernelRing />
                  <Slot $w={11} />
                </Toolbar>
                <Notebook>
                  <NotebookBody>
                    <Markdown>
                      <Heading>Author</Heading>
                      <Para>Elisha L. Gibson</Para>
                    </Markdown>
                    <CodeCell>
                      <CellBar />
                      <Prompt>[ ]:</Prompt>
                      <CellInput>
                        <Slot $w={45}>
                          <DupCell />
                        </Slot>
                        <Slot $w={45}>
                          <MdArrowUpward size={26} />
                        </Slot>
                        <Slot $w={45}>
                          <MdArrowDownward size={26} />
                        </Slot>
                        <Slot $w={45}>
                          <AddCellAbove />
                        </Slot>
                        <Slot $w={45}>
                          <AddCellBelow />
                        </Slot>
                        <Slot $w={45}>
                          <MdDelete size={26} />
                        </Slot>
                      </CellInput>
                    </CodeCell>
                  </NotebookBody>
                  <ScrollTrack>
                    <Tri />
                    <ScrollThumb />
                  </ScrollTrack>
                </Notebook>
              </MainArea>

              <Rail $w={48} $side="right">
                <RailButton>
                  <CogsIcon />
                </RailButton>
                <RailButton>
                  <SpeedIcon />
                </RailButton>
                <RailButton>
                  <BugIcon size={32} />
                </RailButton>
              </Rail>
            </LabBody>
            <StatusBar>
              <StatusCell $w={68}>Simple</StatusCell>
              <StatusCell $w={85}>
                <Toggle>
                  <Knob />
                </Toggle>
              </StatusCell>
              <StatusCell $w={28}>0</StatusCell>
              <StatusCell $w={37}>
                <TermBadge>$_</TermBadge>
              </StatusCell>
              <StatusCell $w={27}>0</StatusCell>
              <StatusCell $w={67}>
                <ChipIcon />
              </StatusCell>
              <StatusCell $w={72}>
                <GitDiamond size={26} color="#616161" />
              </StatusCell>
              <StatusCell $w={33}>
                <TraceIcon />
              </StatusCell>
              {statusRest.map(([w, t]) => (
                <StatusCell $w={w} key={t}>
                  {t}
                </StatusCell>
              ))}
              <StatusCell $w={49}>
                <ShieldX />
              </StatusCell>
              <StatusCell $w={109}>Ln 1, C...</StatusCell>
              <StatusCell $w={207}>English (United Sta...</StatusCell>
              <StatusCell $w={261}>DataScienceEcosystem.ip...</StatusCell>
              <StatusCell $w={24}>1</StatusCell>
              <StatusCell $w={30}>
                <Bell size={26} strokeWidth={1.5} />
              </StatusCell>
            </StatusBar>
            <Toast>
              <ToastTop>
                <ToastText>
                  Would you like to receive official Jupyter news?
                  <br />
                  Please read the privacy policy.
                </ToastText>
                <ToastClose>
                  <MdClose size={24} />
                </ToastClose>
              </ToastTop>
              <ToastActions>
                <ToastButton $w={191} $link>
                  Open privacy policy
                </ToastButton>
                <ToastButton $w={53}>Yes</ToastButton>
                <ToastButton $w={46}>No</ToastButton>
              </ToastActions>
            </Toast>
          </LabWindow>

          <EdgeRail>
            <EdgeSlot>
              <Search size={25} strokeWidth={2} />
            </EdgeSlot>
            <EdgeSlot>
              <TagIcon />
            </EdgeSlot>
            <EdgeSlot>
              <ToolboxIcon />
            </EdgeSlot>
            <EdgeSlot>
              <FaChessPawn size={30} color="#444" />
              <Rook size={20} color="#b44be8" />
            </EdgeSlot>
            <EdgeSlot>
              <M365Icon />
            </EdgeSlot>
            <EdgeSlot>
              <OutlookIcon />
            </EdgeSlot>
            <EdgeSlot>
              <SendIcon />
            </EdgeSlot>
            <EdgeSlot $h={72}>
              <Plus size={24} strokeWidth={1.6} />
            </EdgeSlot>
            <Spacer />
            <EdgeRule />
            <EdgeSlot $h={70}>
              <PanelRight size={24} strokeWidth={1.7} />
            </EdgeSlot>
            <EdgeSlot $h={60}>
              <Settings size={26} strokeWidth={1.6} />
            </EdgeSlot>
          </EdgeRail>
        </Workspace>

        <Taskbar>
          <Weather>
            <AlertDot>1</AlertDot>
            <WeatherCloud />
            <WeatherText>
              36°F
              <span>Cloudy</span>
            </WeatherText>
          </Weather>
          <Slot $w={68}>
            <WinLogo />
          </Slot>
          <SearchBox>
            <Search size={27} color="#222" strokeWidth={2} />
            <SearchLabel>Search</SearchLabel>
            <MapPic />
          </SearchBox>
          <TaskApp $w={2} />
          <TaskApp $w={67}>
            <TaskView />
          </TaskApp>
          <TaskApp $w={66}>
            <ChatIcon />
          </TaskApp>
          <TaskApp $w={66} $dot="#8a8a8a">
            <ExplorerIcon />
          </TaskApp>
          <TaskApp $w={74}>
            <StoreIcon />
            <StoreBadge>1</StoreBadge>
          </TaskApp>
          <TaskApp $w={52}>
            <McAfeeIcon />
          </TaskApp>
          <TaskApp $w={80} $dot="#0067c0" $dotW={24} $hl="#f7f7f8" $hlW={56}>
            <EdgeIcon />
          </TaskApp>
          <TaskApp $w={52} $dot="#8a8a8a">
            <PhotosIcon />
          </TaskApp>
          <TaskApp $w={80} $dot="#8a8a8a">
            <TipsIcon />
          </TaskApp>
          <TaskApp $w={52} $dot="#8a8a8a">
            <DownloadIcon />
          </TaskApp>
          <TaskApp $w={80} $dot="#8a8a8a" $dotW={9}>
            <AppCircle $bg="#7fb0e0">R</AppCircle>
          </TaskApp>
          <TaskApp $w={52} $dot="#c42b1c" $dotW={9} $hl="#fde4e6" $hlW={60}>
            <AppCircle $bg="#dd4a12">✕</AppCircle>
          </TaskApp>
          <Slot $w={22} />
          <Slot $w={56}>
            <ChevronUp size={26} strokeWidth={2} color="#222" />
          </Slot>
          <Slot $w={40}>
            <OneDrive />
          </Slot>
          <Slot $w={58}>
            <SyncDot />
          </Slot>
          <Slot $w={36}>
            <Wifi size={24} strokeWidth={2} color="#222" />
          </Slot>
          <Slot $w={36}>
            <Volume2 size={26} strokeWidth={1.6} color="#222" />
          </Slot>
          <Slot $w={36}>
            <BatteryIcon />
          </Slot>
          <ClockBox>
            9:34 PM
            <br />
            1/28/2024
          </ClockBox>
          <NoteBadge>9</NoteBadge>
        </Taskbar>
      </Screen>
    </>
  );
}
